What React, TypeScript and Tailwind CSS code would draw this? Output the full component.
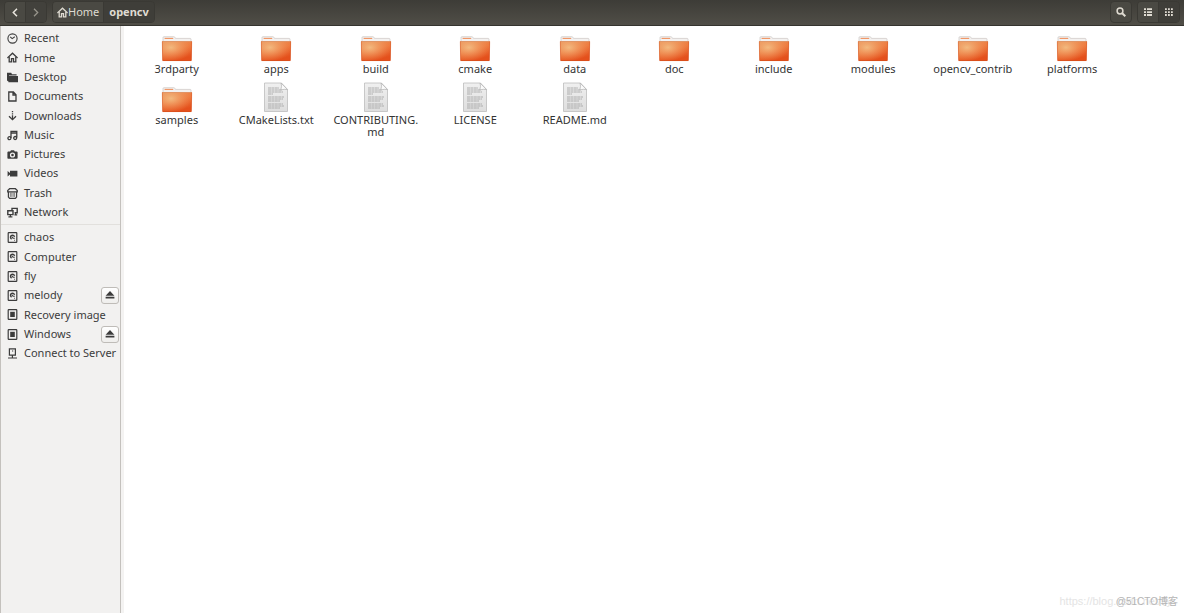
import type { ReactNode } from "react";

const glyphs: Record<string, ReactNode> = {
  recent: (
    <g fill="none" stroke="currentColor" strokeWidth="1.1">
      <circle cx="5.5" cy="5.5" r="4.6" />
      <path d="M3.2 3.8 5.2 5.6 7.8 3.8" />
    </g>
  ),
  home: (
    <g fill="none" stroke="currentColor" strokeWidth="1.3">
      <path d="M.4 6 5.5 1.2 10.6 6" />
      <path d="M2.2 5v4.8h2.3V6.6h2v3.2h2.3V5" />
    </g>
  ),
  desktop: <path fill="currentColor" d="M0 .8h4.2l.8 1.4h4.6v1.2H2v5.8H1L0 8.5zM2.6 4H11v6.2H1.4V4z" />,
  documents: <path fill="none" stroke="currentColor" strokeWidth="1.3" d="M1.8 1h4.6L9 3.8V10H1.8zM6 1v3h3" />,
  downloads: (
    <g fill="none" stroke="currentColor" strokeWidth="1.3">
      <path d="M5.5 1v1.2M5.5 3.2v1.2M5.5 5.2v4" />
      <path d="M2 6.2 5.5 9.6 9 6.2" />
    </g>
  ),
  music: (
    <g fill="none" stroke="currentColor" strokeWidth="1.3">
      <path d="M4 8V1.4H9.8V7.6M4 3h5.8" />
      <circle cx="2.4" cy="8.2" r="1.5" />
      <circle cx="8.2" cy="8" r="1.5" />
    </g>
  ),
  pictures: (
    <path
      fill="currentColor"
      fillRule="evenodd"
      d="M1 2.6h2.2L4 1.2h3l.8 1.4H10l.6.6v6l-.6.6H1l-.6-.6v-6zM5.5 3.4a2.6 2.6 0 1 0 0 5.2 2.6 2.6 0 0 0 0-5.2zM5.5 4.7a1.3 1.3 0 1 1 0 2.6 1.3 1.3 0 0 1 0-2.6z"
    />
  ),
  videos: <path fill="currentColor" d="M.6 3 3 5V2.8h7.4v5.8H3V6.4L.6 8.4z" />,
  trash: (
    <g fill="none" stroke="currentColor">
      <path strokeWidth="1.2" d="M2.6.7h5.8l1.9 1.8v1.3H.7V2.5z" />
      <path strokeWidth="1.2" d="M1.4 3.8V9l1.2 1.3h5.8L9.6 9V3.8" />
      <path strokeWidth=".6" d="M3.4 4.5v4.4M4.8 4.5v4.4M6.2 4.5v4.4M7.6 4.5v4.4" />
    </g>
  ),
  network: (
    <g fill="none" stroke="currentColor" strokeWidth="1.4">
      <path d="M5 3.2V1.4h5.2v4.4H7.6" />
      <path d="M.8 3.8h5.2v3.8H.8z" />
      <path strokeWidth="1.2" d="M3.4 7.6v1.8M1.4 9.8h4M8.6 6v1.6M7.4 7.9h2.8" />
    </g>
  ),
  disk: (
    <g fill="none" stroke="currentColor" strokeWidth="1.2">
      <rect x="1.2" y=".7" width="8.6" height="9.6" rx=".6" />
      <path strokeWidth="1.5" d="M4.6 7A2 2 0 1 1 7.5 4.8" />
      <path strokeWidth="1.1" d="M5.2 4.8 6 6.2 7.8 6.2M7.2 8.2h.8" />
    </g>
  ),
  drive: (
    <g>
      <rect x="1.2" y=".7" width="8.6" height="9.6" rx=".6" fill="none" stroke="currentColor" strokeWidth="1.2" />
      <path fill="currentColor" d="M3.2 2.8h4.6v5.2H3.2z" />
    </g>
  ),
  server: (
    <g fill="none" stroke="currentColor" strokeWidth="1.2">
      <path d="M2.4.8h6v6.4h-6zM5.4 7.2v2.4M1 10h9" />
      <path d="M5 3h1.2" />
    </g>
  ),
};

function Glyph({ name }: { name: string }) {
  return (
    <svg viewBox="0 0 11 11" className="size-[11px] shrink-0" aria-hidden="true">
      {glyphs[name]}
    </svg>
  );
}

const places = [
  ["Recent", "recent"],
  ["Home", "home"],
  ["Desktop", "desktop"],
  ["Documents", "documents"],
  ["Downloads", "downloads"],
  ["Music", "music"],
  ["Pictures", "pictures"],
  ["Videos", "videos"],
  ["Trash", "trash"],
  ["Network", "network"],
];

const devices = [
  ["chaos", "disk"],
  ["Computer", "disk"],
  ["fly", "disk"],
  ["melody", "disk", "eject"],
  ["Recovery image", "drive"],
  ["Windows", "drive", "eject"],
  ["Connect to Server", "server"],
];

const folders = ["3rdparty", "apps", "build", "cmake", "data", "doc", "include", "modules", "opencv_contrib", "platforms", "samples"];
const files = ["CMakeLists.txt", "CONTRIBUTING.\nmd", "LICENSE", "README.md"];

function Place({ item }: { item: string[] }) {
  const [label, icon, eject] = item;
  return (
    <li className="flex min-h-0 items-center">
      <a href="#" className="flex min-w-0 flex-1 items-center gap-[6px] pl-[6px] whitespace-nowrap">
        <Glyph name={icon} />
        {label}
      </a>
      {eject && (
        <button
          aria-label={`Eject ${label}`}
          className="mr-px flex h-[17px] w-[18px] shrink-0 items-center justify-center rounded-[3px] border border-[#bfbcb8] bg-linear-to-b from-white to-[#efeeec]"
        >
          <svg viewBox="0 0 10 8" className="h-2 w-2.5" fill="#3c3c3c" aria-hidden="true">
            <path d="M5 0 9.4 4.8H.6zM.6 5.8h8.8v1.7H.6z" />
          </svg>
        </button>
      )}
    </li>
  );
}

function FolderIcon() {
  return (
    <svg viewBox="0 0 32 27" className="h-[27px] w-8" aria-hidden="true">
      <path d="M2 2.6q0-.9.9-.9h10q.8 0 1.1.8l.4.9h14.7q.9 0 .9.9V10H2z" fill="#f3f1f0" stroke="#cbc6c3" strokeWidth=".7" />
      <path d="M3.6 3.4h8.6" stroke="#f0925f" strokeWidth="1.1" />
      <path d="M1 6.2h30l-.4 19q0 .8-.9.8H2.3q-.9 0-.9-.8z" fill="url(#folder-face)" />
      <path d="M1 6.2h30l-.4 19q0 .8-.9.8H2.3q-.9 0-.9-.8z" fill="url(#folder-shine)" />
      <path d="M1.2 6.5h29.6" stroke="#d98a5c" strokeWidth=".6" />
      <path d="M1.3 6.5 1.7 25.6h28.6l.4-19.1" fill="none" stroke="#cf4a1a" strokeOpacity=".7" strokeWidth=".6" />
    </svg>
  );
}

function FileIcon() {
  return (
    <svg viewBox="0 0 26 31" className="h-[31px] w-[26px]" aria-hidden="true">
      <path d="M1.5 1h17l6 6.4v22.1h-23z" fill="url(#paper)" stroke="#bdbdbd" strokeWidth=".8" />
      <path d="M18 1q1.2 3.2-.2 6.9 3.8-1 6.700-.3z" fill="#fbfbfb" stroke="#b0b0b0" strokeWidth=".7" />
      <path
        d="M5 6h11M5 8h14M5 10h15M5 12h5M5 15h16M5 17h15M5 19h12M5 22h15M5 24h16M5 26h12"
        stroke="#adadad"
        strokeWidth="1"
        strokeDasharray="3 .4"
      />
    </svg>
  );
}

function Entry({ label, children }: { label: string; children: ReactNode }) {
  return (
    <li>
      <a href="#" className="flex flex-col items-center">
        <span className="flex h-[31px] items-end">{children}</span>
        <span className="mt-px text-center leading-3 whitespace-pre-line">{label}</span>
      </a>
    </li>
  );
}

export default function App() {
  return (
    <div className="relative flex min-h-screen flex-col bg-white font-['Noto_Sans','Noto_Sans_CJK_SC',sans-serif] text-[11px] text-[#3c3c3c]">
      <svg className="absolute size-0" aria-hidden="true">
        <defs>
          <linearGradient id="folder-face" x1="0" y1="0" x2=".4" y2="1">
            <stop offset="0" stopColor="#e8935a" />
            <stop offset=".5" stopColor="#ee7a3e" />
            <stop offset="1" stopColor="#e4501c" />
          </linearGradient>
          <radialGradient id="folder-shine" cx=".3" cy=".32" r=".7">
            <stop offset="0" stopColor="#f3c48a" stopOpacity=".85" />
            <stop offset="1" stopColor="#f29a62" stopOpacity="0" />
          </radialGradient>
          <linearGradient id="paper" x1="0" y1="0" x2="0" y2="1">
            <stop offset="0" stopColor="#f0f0f0" />
            <stop offset="1" stopColor="#dedede" />
          </linearGradient>
        </defs>
      </svg>

      <header className="flex h-[26px] items-center justify-between border-b border-[#35342f] bg-linear-to-b from-[#3d3c37] to-[#504e47] px-1 pb-px text-[#dfdbd2]">
        <nav className="flex items-center gap-[5px]" aria-label="Location">
          <div className="flex h-[22px] w-[43px] overflow-hidden rounded-[4px] border border-[#3a3934]">
            <button aria-label="Back" className="flex flex-1 items-center justify-center border-r border-[#3a3934] bg-[#4a4943]">
              <svg viewBox="0 0 6 9" className="h-[9px] w-1.5" fill="none" stroke="#e8e5dd" strokeWidth="1.5" aria-hidden="true"><path d="M5 .8 1.3 4.5 5 8.2" /></svg>
            </button>
            <button aria-label="Forward" className="flex flex-1 items-center justify-center bg-[#42413c]">
              <svg viewBox="0 0 6 9" className="h-[9px] w-1.5" fill="none" stroke="#97948b" strokeWidth="1.3" aria-hidden="true"><path d="m1 .8 3.7 3.7L1 8.2" /></svg>
            </button>
          </div>
          <div className="flex h-[22px] overflow-hidden rounded-[4px] border border-[#3a3934]">
            <button className="flex items-center border-r border-[#3a3934] bg-[#4a4943] px-1">
              <Glyph name="home" />
              Home
            </button>
            <button className="bg-[#3f3e39] px-[5px] font-bold">opencv</button>
          </div>
        </nav>
        <div className="flex items-center gap-[5px]">
          <button aria-label="Search" className="flex h-[22px] w-[22px] items-center justify-center rounded-[4px] border border-[#3a3934] bg-[#4a4943]">
            <svg viewBox="0 0 10 10" className="size-2.5" fill="none" stroke="currentColor" aria-hidden="true">
              <circle cx="4" cy="4" r="2.9" strokeWidth="1.5" />
              <path d="m6.2 6.2 3.1 3.1" strokeWidth="2" />
            </svg>
          </button>
          <div className="flex h-[22px] w-[43px] overflow-hidden rounded-[4px] border border-[#3a3934]">
            <button aria-label="List view" className="flex flex-1 items-center justify-center border-r border-[#3a3934] bg-[#4a4943]">
              <svg viewBox="0 0 8 8" className="size-2" fill="currentColor" aria-hidden="true">
                <path d="M0 .3h2v1.8H0zM3 .3h5v1.8H3zM0 3.2h2V5H0zM3 3.2h5V5H3zM0 6.1h2v1.8H0zM3 6.1h5v1.8H3z" />
              </svg>
            </button>
            <button aria-label="Icon view" className="flex flex-1 items-center justify-center bg-[#3f3e39]">
              <svg viewBox="0 0 8 8" className="size-2" fill="currentColor" aria-hidden="true">
                <path d="M0 .3h1.8v1.8H0zM3 .3h1.8v1.8H3zM6 .3h1.8v1.8H6zM0 3.2h1.8V5H0zM3 3.2h1.8V5H3zM6 3.2h1.8V5H6zM0 6.1h1.8v1.8H0zM3 6.1h1.8v1.8H3zM6 6.1h1.8v1.8H6z" />
              </svg>
            </button>
          </div>
        </div>
      </header>

      <div className="flex flex-1">
        <aside className="w-[121px] shrink-0 border-x border-[#c4c1bd] bg-[#f2f1f0] pt-[3px]">
          <ul className="grid h-[193px] auto-rows-fr">
            {places.map((p) => (
              <Place key={p[0]} item={p} />
            ))}
          </ul>
          <hr className="mt-0.5 mb-[3px] border-[#e2e0dd]" />
          <ul className="grid h-[135px] auto-rows-fr">
            {devices.map((d) => (
              <Place key={d[0]} item={d} />
            ))}
          </ul>
        </aside>
        <div className="w-[3px] shrink-0 bg-[#f4f3f2]" />
        <main className="flex-1 pt-1 pr-[62px] pl-[3px]">
          <ul className="grid grid-cols-10 gap-y-[7px] pt-px text-[#333]">
            {folders.map((name) => (
              <Entry key={name} label={name}>
                <FolderIcon />
              </Entry>
            ))}
            {files.map((name) => (
              <Entry key={name} label={name}>
                <FileIcon />
              </Entry>
            ))}
          </ul>
        </main>
      </div>

      <span className="absolute right-[12px] bottom-1 font-['Liberation_Sans',sans-serif] text-[11px] leading-[15px] text-[#e4e4e4]">https://blog.csdn.net/fly</span>
      <span className="absolute right-[6px] bottom-1 font-['Liberation_Sans','Noto_Sans_CJK_SC',sans-serif] text-[10px] leading-[15px] text-[#b5b5b5]">@51CTO博客</span>
    </div>
  );
}
